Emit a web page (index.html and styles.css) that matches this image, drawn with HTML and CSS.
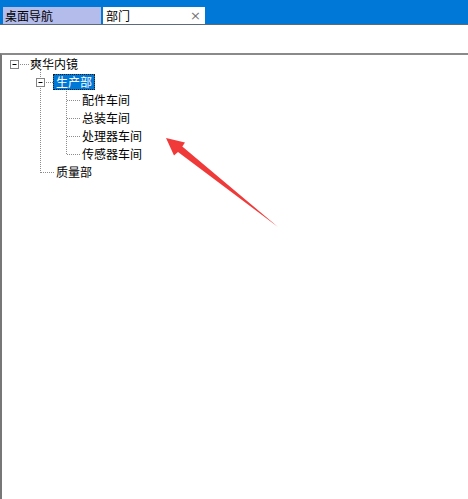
FILE: index.html
```html
<!DOCTYPE html>
<html lang="zh">
<head>
<meta charset="utf-8">
<link rel="stylesheet" href="styles.css">
</head>
<body>
<div class="tabbar">
  <div class="tab tab-inactive">桌面导航</div>
  <div class="tab tab-active"><span>部门</span><span class="close">×</span></div>
</div>
<div class="spacer"></div>
<div class="panel">
  <ul class="tree">
    <li class="row lvl0"><span class="label">爽华内镜</span></li>
    <li class="row lvl1"><span class="label selected">生产部</span></li>
    <li class="row lvl2"><span class="label">配件车间</span></li>
    <li class="row lvl2"><span class="label">总装车间</span></li>
    <li class="row lvl2"><span class="label">处理器车间</span></li>
    <li class="row lvl2"><span class="label">传感器车间</span></li>
    <li class="row lvl1"><span class="label">质量部</span></li>
  </ul>
</div>
<svg class="lines" width="468" height="499" viewBox="0 0 468 499">
  <g fill="none" stroke="#8c8c8c" stroke-width="1" stroke-dasharray="1 1">
    <path d="M20 64.5H29"/>
    <path d="M40.5 70V78"/>
    <path d="M40.5 88V173"/>
    <path d="M46 82.5H53"/>
    <path d="M41 172.5H55"/>
    <path d="M66.5 91V155"/>
    <path d="M67 100.5H81"/>
    <path d="M67 118.5H81"/>
    <path d="M67 136.5H81"/>
    <path d="M67 154.5H81"/>
  </g>
  <g fill="#fff" stroke="#848484" stroke-width="1">
    <rect x="10.5" y="60.5" width="8" height="8"/>
    <rect x="36.5" y="78.5" width="8" height="8"/>
  </g>
  <g stroke="#000" stroke-width="1">
    <path d="M12.5 64.5H16.5"/>
    <path d="M38.5 82.5H42.5"/>
  </g>
</svg>
<svg class="arrow" width="468" height="499" viewBox="0 0 468 499">
  <polygon fill="#f03a3a" points="166,138 185,142.5 182.3,146.5 278,227 178,151.9 174,155.5"/>
</svg>
</body>
</html>
```
FILE: styles.css
```css
html, body {
  margin: 0;
  padding: 0;
  background: #ffffff;
}
body {
  position: relative;
  width: 468px;
  height: 499px;
  overflow: hidden;
  font-family: "Noto Sans CJK SC", "Noto Sans", sans-serif;
  font-size: 12px;
  color: #000;
}
.tabbar {
  height: 24px;
  background: #0078d7;
  border-bottom: 1px solid #5b6b7c;
  display: flex;
  align-items: flex-end;
  gap: 2px;
  padding-left: 3px;
  box-sizing: content-box;
}
.tab {
  height: 17px;
  line-height: 17px;
  box-sizing: border-box;
  padding-left: 2px;
}
.tab-inactive {
  width: 98px;
  background: #b4bcec;
}
.tab-active {
  width: 102px;
  background: #ffffff;
  display: flex;
  justify-content: space-between;
  padding-left: 3px;
  padding-right: 4px;
}
.close {
  color: #777;
  font-family: "DejaVu Sans", sans-serif;
  font-size: 13px;
}
.spacer {
  height: 28px;
}
.panel {
  border-top: 2px solid #8a8a8a;
  border-left: 2px solid #777;
  height: 450px;
}
.tree {
  list-style: none;
  margin: 0;
  padding: 0;
}
.row {
  height: 18px;
  display: flex;
  align-items: center;
}
.lvl0 { padding-left: 28px; }
.lvl1 { padding-left: 51px; }
.lvl2 { padding-left: 80px; }
.label {
  line-height: 16px;
  height: 16px;
  padding: 0 0 0 0;
}
.lvl1 .label { padding-left: 3px; }
.label.selected {
  background: #0078d7;
  color: #fff;
  outline: 1px dotted #1a1a1a;
  outline-offset: -1px;
  padding: 0 3px 0 3px;
}
.lines, .arrow {
  position: absolute;
  left: 0;
  top: 0;
  pointer-events: none;
}
```
